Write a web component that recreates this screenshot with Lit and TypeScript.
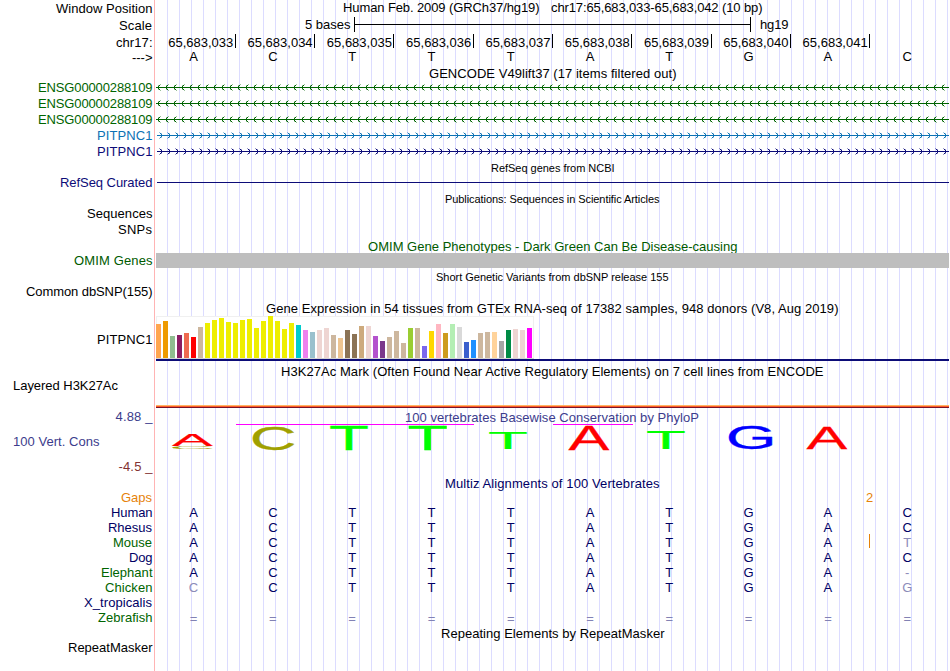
import { LitElement, html, svg, css, nothing, TemplateResult } from "lit";
import { customElement } from "lit/decorators.js";

const TRACK_WIDTH = 793;
const POSITIONS = [33, 34, 35, 36, 37, 38, 39, 40, 41];
const SEQUENCE = "ACTTTATGAC";

interface Species {
  name: string;
  width: number;
  color: string;
  bases: string;
  // indexes of the bases that differ from human
  faded?: number[];
  insertAt?: number;
}

interface LogoLetter {
  base: string;
  x0: number;
  x1: number;
  top: number;
  bottom: number;
}

const SPECIES: Species[] = [
  { name: "Human", width: 41.5, color: "navy", bases: "ACTTTATGAC" },
  { name: "Rhesus", width: 44, color: "navy", bases: "ACTTTATGAC" },
  { name: "Mouse", width: 39, color: "green", bases: "ACTTTATGAT", faded: [9], insertAt: 713 },
  { name: "Dog", width: 23.5, color: "navy", bases: "ACTTTATGAC" },
  { name: "Elephant", width: 51.5, color: "green", bases: "ACTTTATGA-", faded: [9] },
  { name: "Chicken", width: 47.5, color: "green", bases: "CCTTTATGAG", faded: [0, 9] },
  { name: "X_tropicalis", width: 68, color: "navy", bases: "" },
  { name: "Zebrafish", width: 54.5, color: "green", bases: "==========" },
];

// color and bar heights of neighbouring tissues
const GTEX: [string, number[]][] = [
  ["#ffa54f", [34]],
  ["#ee9a00", [37]],
  ["#8fbc8f", [22]],
  ["#8b1c62", [23]],
  ["#ee6a50", [25]],
  ["#ff0000", [21]],
  ["#cdb79e", [31]],
  ["#eeee00", [35, 38, 40, 36, 35, 38, 39, 30, 37, 42, 37, 29, 35]],
  ["#00cdcd", [33]],
  ["#ee82ee", [28]],
  ["#9ac0cd", [26]],
  ["#eed5d2", [28, 30]],
  ["#cdb79e", [23]],
  ["#eec591", [20]],
  ["#8b7355", [28, 24]],
  ["#cdaa7d", [32]],
  ["#eed5d2", [32]],
  ["#b452cd", [22]],
  ["#7a378b", [17]],
  ["#cdb79e", [21, 27, 15]],
  ["#9acd32", [30]],
  ["#cdb79e", [30]],
  ["#7a67ee", [12]],
  ["#ffd700", [27]],
  ["#ffb6c1", [34]],
  ["#cd9b1d", [25]],
  ["#b4eeb4", [34]],
  ["#d9d9d9", [31]],
  ["#3a5fcd", [16]],
  ["#1e90ff", [18]],
  ["#cdb79e", [25, 26]],
  ["#ffd39b", [26]],
  ["#a6a6a6", [17]],
  ["#008b45", [28]],
  ["#eed5d2", [29, 28]],
  ["#ff00ff", [30]],
];

const LOGO: LogoLetter[] = [
  { base: "A", x0: 16, x1: 56.5, top: 27, bottom: 38 },
  { base: "C", x0: 16.5, x1: 56.5, top: 38, bottom: 41 },
  { base: "C", x0: 97, x1: 138, top: 18, bottom: 42 },
  { base: "T", x0: 174.5, x1: 211.5, top: 18, bottom: 42 },
  { base: "T", x0: 253, x1: 290.5, top: 18, bottom: 42 },
  { base: "T", x0: 333.5, x1: 370.5, top: 24, bottom: 41 },
  { base: "A", x0: 412.5, x1: 453, top: 18, bottom: 42 },
  { base: "T", x0: 491.5, x1: 528.5, top: 23, bottom: 41 },
  { base: "G", x0: 573, x1: 616.5, top: 18, bottom: 41 },
  { base: "A", x0: 650.5, x1: 691, top: 20, bottom: 41 },
];

const BASE_COLORS: Record<string, string> = {
  A: "#ff0000",
  C: "#a0a000",
  G: "#0000ff",
  T: "#00ff00",
};

// glyph bounds at font-size 100: left, right, below baseline, above baseline
const GLYPHS: Record<string, number[]> = {
  A: [0.2, 66.5, 0, 68.8],
  C: [5, 68.3, 1, 69.8],
  G: [5, 71.4, 1, 69.8],
  T: [2.2, 58.8, 0, 68.8],
};

@customElement("app-root")
export class AppRoot extends LitElement {
  static styles = css`
    :host {
      display: block;
      width: 950px;
      height: 671px;
      overflow: hidden;
      background: #fff;
      color: #000;
      font: 13px/15px "Liberation Sans", Arial, sans-serif;
    }

    .browser {
      display: flex;
      flex-direction: column;
      width: 949px;
      height: 671px;
      background:
        linear-gradient(#ffb4b4, #ffb4b4) 154px 0 / 1px 100% no-repeat,
        repeating-linear-gradient(
            to right,
            #dcdcff 0,
            #dcdcff 1px,
            transparent 1px,
            transparent 12px
          )
          167px 0 / 782px 100% no-repeat;
    }

    .row {
      display: grid;
      grid-template-columns: 152px 793px;
      column-gap: 4px;
      flex: none;
    }

    .label {
      display: flex;
      flex-direction: column;
      align-items: flex-end;
    }

    .label.left {
      align-items: flex-start;
      padding-left: 13px;
    }

    .title {
      display: flex;
      justify-content: center;
      gap: 11.5px;
    }

    svg {
      display: block;
      overflow: visible;
    }

    text {
      fill: currentColor;
    }

    .letter {
      font-size: 100px;
      stroke-width: 0.4px;
      vector-effect: non-scaling-stroke;
    }

    .crisp {
      shape-rendering: crispEdges;
    }

    .small {
      font-size: 11px;
    }

    .navy {
      color: #000064;
    }

    .refseq {
      color: #0c0c78;
    }

    .green {
      color: #006400;
    }

    .omim {
      color: #005a00;
    }

    .blue {
      color: #0c72b4;
    }

    .cons {
      color: #3c3c8c;
    }

    .negative {
      color: #823232;
    }

    .gaps {
      color: #e6820a;
    }

    .coords,
    .bases {
      display: grid;
      grid-template-columns: repeat(10, 79.3px);
      text-align: center;
    }

    .coords {
      margin-left: 0.5px;
      text-align: right;
    }

    .coord {
      height: 14px;
      padding-right: 1.5px;
      border-right: 1px solid #000;
      line-height: 17px;
    }

    .base {
      padding-right: 4.2px;
    }

    .equals {
      padding-top: 1px;
      color: #8282b4;
    }

    .faded {
      color: #8c8cb9;
    }

    .species {
      display: grid;
    }

    .species > * {
      grid-area: 1 / 1;
    }

    .bar {
      height: 15px;
      background: #bebebe;
    }
  `;

  private text(value: string, width: number, baseline = 12, cls = "") {
    return html`
      <svg class=${cls} width=${width} height="15">
        <text y=${baseline} textLength=${width}>${value}</text>
      </svg>
    `;
  }

  private row(height: number, label: unknown, track: unknown = nothing) {
    return html`
      <div class="row" style="height:${height}px">
        <div class="label">${label}</div>
        <div class="track">${track}</div>
      </div>
    `;
  }

  private title(height: number, value: string, width: number, baseline = 12, cls = "") {
    return this.row(
      height,
      nothing,
      html`<div class="title">${this.text(value, width, baseline, cls)}</div>`
    );
  }

  private scale() {
    return html`
      <svg width=${TRACK_WIDTH} height="17">
        <text x="149" y="12" textLength="45.5">5 bases</text>
        <path class="crisp" d="M198.5 0v15M198 7.5h396M594.5 0v15" stroke="#000" />
        <text x="604" y="12" textLength="28.5">hg19</text>
      </svg>
    `;
  }

  private bases(sequence: string, cls = "", faded: number[] = []) {
    return html`
      <div class="bases ${cls}">
        ${[...sequence].map(
          (base, i) => html`
            <span
              class="base ${faded.includes(i) ? "faded" : ""} ${base === "=" ? "equals" : ""}"
              >${base}</span
            >
          `
        )}
      </div>
    `;
  }

  private transcript(strand: "+" | "-") {
    let solid = "";
    let soft = "";
    const dir = strand === "-" ? 1 : -1;
    const start = strand === "-" ? 1 : 6;
    for (let x = start; x < TRACK_WIDTH - 1; x += 8) {
      for (const side of [-1, 1]) {
        solid += `M${x + dir} ${7 + side}h1v1h-1zM${x + 2 * dir} ${7 + 2 * side}h1v1h-1z`;
        soft += `M${x + dir} ${7 + 2 * side}h1v1h-1zM${x + 3 * dir} ${7 + 3 * side}h1v1h-1z`;
      }
    }
    const from = strand === "-" ? 0 : 1;
    return html`
      <svg class="crisp" width=${TRACK_WIDTH} height="16" fill="currentColor">
        <rect x=${from} y="7" width=${TRACK_WIDTH - from} height="1" />
        <path d=${solid} />
        <path d=${soft} opacity="0.4" />
      </svg>
    `;
  }

  private gene(name: string, width: number, strand: "+" | "-", cls: string) {
    return html`
      <div class=${cls}>
        ${this.row(16, this.text(name, width), this.transcript(strand))}
      </div>
    `;
  }

  private expression() {
    const bars = GTEX.flatMap(([color, heights]) => heights.map((h) => ({ color, h })));
    return html`
      <svg class="crisp" width=${TRACK_WIDTH} height="46">
        <rect x="0" y="0" width="378" height="43" fill="#f0f0f0" />
        <rect x="1" y="1" width="376" height="41" fill="#fff" />
        <rect x="0" y="42" width="378" height="1" fill="#d3d3d3" />
        ${bars.map(
          ({ color, h }, i) =>
            svg`<rect x=${i * 7} y=${42 - h} width="5" height=${h} fill=${color} />`
        )}
        <rect x="0" y="43" width=${TRACK_WIDTH} height="2" fill="#0c0c78" />
      </svg>
    `;
  }

  private h3k27ac() {
    return html`
      <svg class="crisp" width=${TRACK_WIDTH} height="30">
        <rect y="27" width=${TRACK_WIDTH} height="1" fill="#ffb464" />
        <rect y="28" width=${TRACK_WIDTH} height="1" fill="#ff5a28" />
        <rect y="29" width=${TRACK_WIDTH} height="1" fill="#781428" />
      </svg>
    `;
  }

  private letter({ base, x0, x1, top, bottom }: LogoLetter) {
    const [left, right, below, above] = GLYPHS[base];
    const sx = (x1 - x0) / (right - left);
    const sy = (bottom - top) / (above + below);
    const color = BASE_COLORS[base];
    return svg`
      <text
        class="letter"
        style="fill:${color};stroke:${color}"
        transform="translate(${x0 - left * sx} ${bottom - below * sy}) scale(${sx} ${sy})"
      >${base}</text>
    `;
  }

  private conservation() {
    return html`
      <svg width=${TRACK_WIDTH} height="68">
        <path class="crisp" d="M80 16.5h238M397 16.5h80" stroke="#ff00ff" />
        <text class="cons" x="249" y="14" textLength="294">100 vertebrates Basewise Conservation by PhyloP</text>
        ${LOGO.map((letter) => this.letter(letter))}
      </svg>
    `;
  }

  private species(s: Species): TemplateResult {
    const insert = s.insertAt
      ? html`
          <svg class="crisp" width=${TRACK_WIDTH} height="15">
            <rect x=${s.insertAt} y="-1" width="1" height="14" fill="#e6820a" />
          </svg>
        `
      : nothing;
    return this.row(
      15,
      this.text(s.name, s.width, 12, s.color),
      html`<div class="species">${insert}${this.bases(s.bases, "navy", s.faded)}</div>`
    );
  }

  render() {
    return html`
      <div class="browser">
        ${this.row(
          17,
          this.text("Window Position", 96.5, 13),
          html`
            <div class="title">
              ${this.text("Human Feb. 2009 (GRCh37/hg19)", 196.5)}
              ${this.text("chr17:65,683,033-65,683,042 (10 bp)", 211.5)}
            </div>
          `
        )}
        ${this.row(17, this.text("Scale", 33, 13), this.scale())}
        ${this.row(
          15,
          this.text("chr17:", 36.5, 13),
          html`
            <div class="coords">
              ${POSITIONS.map((p) => html`<span class="coord">65,683,0${p}</span>`)}
            </div>
          `
        )}
        ${this.row(17, this.text("--->", 20.5, 13), this.bases(SEQUENCE))}
        ${this.title(14, "GENCODE V49lift37 (17 items filtered out)", 247.5)}
        ${[0, 1, 2].map(() => this.gene("ENSG00000288109", 114.5, "-", "green"))}
        ${this.gene("PITPNC1", 55.5, "+", "blue")}
        ${this.gene("PITPNC1", 55.5, "+", "refseq")}
        ${this.title(15, "RefSeq genes from NCBI", 123.5, 12, "small")}
        ${this.row(
          16,
          this.text("RefSeq Curated", 92.5, 12, "refseq"),
          html`
            <svg class="crisp" width=${TRACK_WIDTH} height="16">
              <rect x="1" y="7" width="792" height="1" fill="#0c0c78" />
            </svg>
          `
        )}
        ${this.title(15, "Publications: Sequences in Scientific Articles", 214.5, 12, "small")}
        ${this.row(16, this.text("Sequences", 65.5))}
        ${this.row(16, this.text("SNPs", 34))}
        ${this.title(
          15,
          "OMIM Gene Phenotypes - Dark Green Can Be Disease-causing",
          369.5,
          13,
          "omim"
        )}
        ${this.row(16, this.text("OMIM Genes", 78.5, 12, "omim"), html`<div class="bar"></div>`)}
        ${this.title(15, "Short Genetic Variants from dbSNP release 155", 232.5, 12, "small")}
        ${this.row(16, this.text("Common dbSNP(155)", 126.5))}
        ${this.title(
          16,
          "Gene Expression in 54 tissues from GTEx RNA-seq of 17382 samples, 948 donors (V8, Aug 2019)",
          572.5,
          13
        )}
        ${this.row(46, this.text("PITPNC1", 55.5, 28), this.expression())}
        ${this.title(
          16,
          "H3K27Ac Mark (Often Found Near Active Regulatory Elements) on 7 cell lines from ENCODE",
          542.5,
          14
        )}
        <div class="row" style="height:30px">
          <div class="label left">${this.text("Layered H3K27Ac", 105)}</div>
          ${this.h3k27ac()}
        </div>
        <div class="row" style="height:68px">
          <div class="cons">
            <svg width="152" height="68">
              <text x="115.5" y="13" textLength="37">4.88 _</text>
              <text x="13" y="38" textLength="86.5">100 Vert. Cons</text>
              <text class="negative" x="118.5" y="63" textLength="34">-4.5 _</text>
            </svg>
          </div>
          ${this.conservation()}
        </div>
        ${this.title(14, "Multiz Alignments of 100 Vertebrates", 214.5, 12, "navy")}
        ${this.row(
          15,
          this.text("Gaps", 31, 12, "gaps"),
          html`
            <svg class="gaps" width=${TRACK_WIDTH} height="15">
              <text x="710" y="12">2</text>
            </svg>
          `
        )}
        ${SPECIES.map((s) => this.species(s))}
        ${this.title(15, "Repeating Elements by RepeatMasker", 223.5, 13)}
        ${this.row(16, this.text("RepeatMasker", 84.5))}
      </div>
    `;
  }
}
